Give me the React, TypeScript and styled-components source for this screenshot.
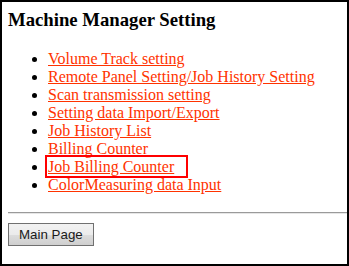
import React from "react";
import styled, { createGlobalStyle } from "styled-components";

const GlobalStyle = createGlobalStyle`
  html, body {
    margin: 0;
    padding: 0;
    background: #ffffff;
  }
  body {
    font-family: "Liberation Serif", "Times New Roman", serif;
    font-size: 16px;
    color: #000000;
  }
`;

const Frame = styled.div`
  box-sizing: border-box;
  width: 349px;
  height: 266px;
  border: 2px solid #000000;
  padding: 7px 0 0 6px;
  overflow: hidden;
`;

const Title = styled.h3`
  margin: 0 0 20px;
  font-size: 18.72px;
  line-height: 21px;
  font-weight: bold;
`;

const MenuList = styled.ul`
  margin: 0 0 18px;
  padding-left: 40px;
  list-style: disc;
  line-height: 18px;
`;

const MenuItem = styled.li`
  color: #000000;
`;

const MenuLink = styled.a<{ $selected?: boolean }>`
  color: #ff3300;
  text-decoration: underline;
  cursor: pointer;
  ${({ $selected }) =>
    $selected &&
    `
    padding-right: 11px;
    outline: 2px solid #ff0000;
    outline-offset: 1px;
  `}
`;

const Divider = styled.hr`
  margin: 0 0 9px;
  height: 0;
  border: none;
  border-top: 1px solid #9a9a9a;
  border-bottom: 1px solid #e6e6e6;
`;

const MainButton = styled.button`
  box-sizing: border-box;
  height: 23px;
  padding: 0 10px;
  border: 1px solid #707070;
  border-radius: 0;
  background: linear-gradient(#f2f2f2, #ebebeb 50%, #dddddd 51%, #cfcfcf);
  font-family: "Liberation Sans", Arial, sans-serif;
  font-size: 13.33px;
  color: #1a1a1a;
  cursor: pointer;
`;

const items = [
  "Volume Track setting",
  "Remote Panel Setting/Job History Setting",
  "Scan transmission setting",
  "Setting data Import/Export",
  "Job History List",
  "Billing Counter",
  "Job Billing Counter",
  "ColorMeasuring data Input",
];

const App = () => {
  return (
    <>
      <GlobalStyle />
      <Frame>
        <Title>Machine Manager Setting</Title>
        <MenuList>
          {items.map((label) => (
            <MenuItem key={label}>
              <MenuLink $selected={label === "Job Billing Counter"}>
                {label}
              </MenuLink>
            </MenuItem>
          ))}
        </MenuList>
        <Divider />
        <MainButton>Main Page</MainButton>
      </Frame>
    </>
  );
};

export default App;
